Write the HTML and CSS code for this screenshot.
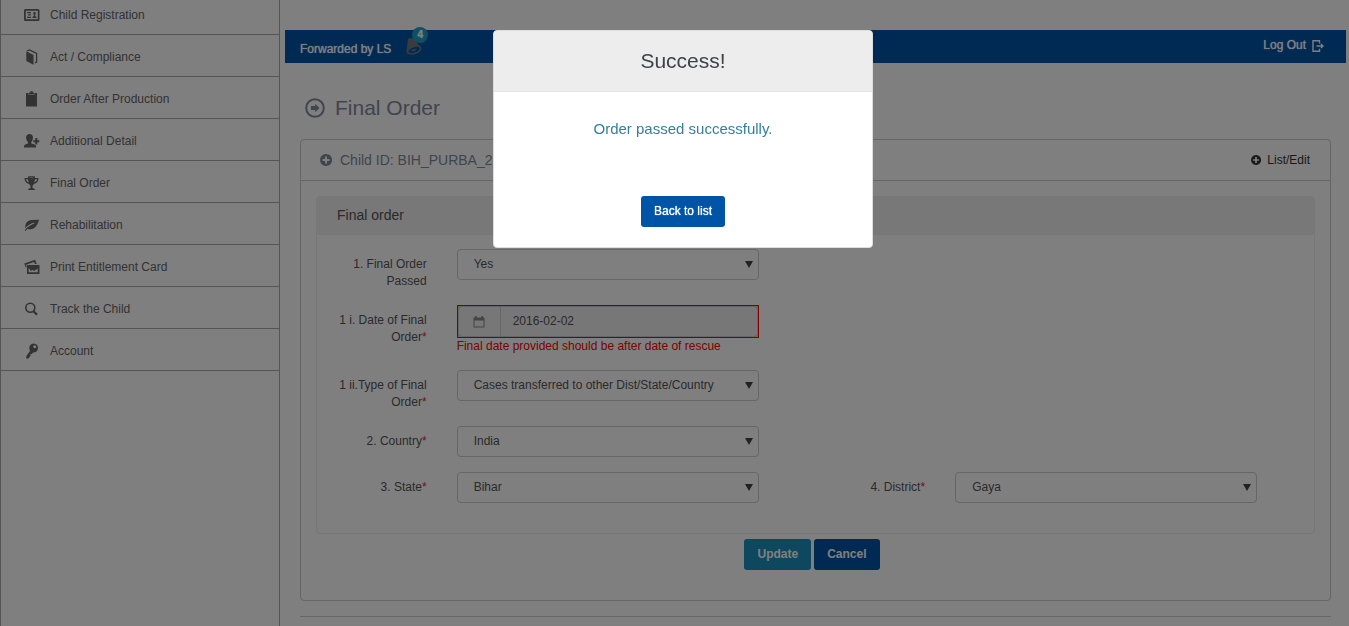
FILE: index.html
```html
<!DOCTYPE html>
<html lang="en">
<head>
<meta charset="utf-8">
<title>Final Order</title>
<link rel="stylesheet" href="styles.css">
</head>
<body>
<div class="layout">
  <nav class="sidebar">
    <ul class="menu">
      <li><a href="#"><svg class="icon" viewBox="0 0 16 16"><path fill-rule="evenodd" d="M1.500 2h12.500q1.500 0 1.500 1.500v9q0 1.500-1.500 1.500h-12.500Q0 14 0 12.500v-9Q0 2 1.500 2zM1.800 3.800v8.500h12V3.800zM3 5h4v1.300H3zM4 7.300h3v1.300H4zM3 9.700h4V11H3zM8.500 11v-1l1.300-1V7.500Q9 7 9.200 6 9.400 5 10.500 5t1.300 1q.2 1-.6 1.500V9l1.300 1v1z"/></svg>Child Registration</a></li>
      <li><a href="#"><svg class="icon" viewBox="0 0 16 16"><path d="M2.300 2.200 9.500 6v9.800L2.300 12z"/><path d="M3 2 5.500.9 12.600 4.500V13l-1.800.8" fill="none" stroke="currentColor" stroke-width="1.300"/></svg>Act / Compliance</a></li>
      <li><a href="#"><svg class="icon" viewBox="0 0 16 16"><path d="M2 2h2.500v1.500h6V2H13v13.500H2z"/><path d="M5 1.500h1.300V.3h2.500v1.200H10V3H5z"/></svg>Order After Production</a></li>
      <li><a href="#"><svg class="icon" viewBox="0 0 16 16"><path d="M0 14.500V13q0-1.500 4-2.500V9.200Q2 7 2 4.500 2.300 1 5.500 1T9 4.500Q9 7 7.300 9.200v1.300q4.700 1 4.700 2.500v1.500z"/><path d="M11.300 5h2v2.200h2v2h-2v2.300h-2V9.200h-2v-2h2z"/></svg>Additional Detail</a></li>
      <li><a href="#"><svg class="icon" viewBox="0 0 16 16"><path fill-rule="evenodd" d="M4 1.500Q7.500.4 11 1.500V3h3.500Q14.500 8 9.800 9 9 10.500 8.500 11v2q2 .2 2.500 2H4q.5-1.800 2.500-2v-2q-.5-.5-1.300-2Q.500 8 .5 3H4zM1.900 4.200Q2.300 6.800 4.700 7.500L4 4.200zm11.200 0H11l-.7 3.300q2.400-.7 2.800-3.300zM5.200 2.200q2.300.8 4.600 0-2.300-.7-4.600 0z"/></svg>Final Order</a></li>
      <li><a href="#"><svg class="icon" viewBox="0 0 16 16"><path fill-rule="evenodd" d="M15.200 2.800Q12 13 5.500 12.300q-1.200 0-2.200-.5L1.700 14 .7 13.300Q3 9.800 10.500 6.200L10.200 5.500Q4 7.500 1.200 11.300.8 4 7 3 11 2.800 15.200 2.800z"/></svg>Rehabilitation</a></li>
      <li><a href="#"><svg class="icon" viewBox="0 0 16 16"><path fill-rule="evenodd" d="M3 6h12.500v9H3zM4.700 13.300h9V9.500L10 12 8.500 10.800 7 12 4.700 9z"/><path d="M.2 4.500 11 .8 12.800 5H11l-1-2L2 5.700l.8 2.500-1 .3z"/><path d="M3 6h12v2.500H3z"/></svg>Print Entitlement Card</a></li>
      <li><a href="#"><svg class="icon" viewBox="0 0 16 16"><g fill="none" stroke="currentColor"><circle cx="6.300" cy="6.700" r="4.500" stroke-width="1.600"/><path d="M9.300 10 13 13.700" stroke-width="2.200"/></g></svg>Track the Child</a></li>
      <li><a href="#"><svg class="icon" viewBox="0 0 16 16"><path fill-rule="evenodd" d="M9.500.5q4.500.3 4.500 4.500-.3 4.500-5 4.500l-1 1.500H6.500v1.700L4.500 15.500H2.300V13L6 8Q4.500 4 6.300 2 7.500.5 9.500.5zM10.700 2.300a1.500 1.500 0 1 0 .1 0z"/></svg>Account</a></li>
    </ul>
  </nav>

  <main class="main">
    <header class="topbar">
      <a class="topbar-note" href="#">Forwarded by LS
        <span class="bell"><svg class="bell-icon" viewBox="0 0 16 17"><path d="M2 1Q4-1 8 1l5.500 7L1 16Q0 14 .8 11z"/><ellipse cx="8.200" cy="12" rx="6.800" ry="3.500" transform="rotate(-20 8.200 12)" fill="#0054a8" stroke="currentColor" stroke-width="1.500"/><path d="M4.500 12.500Q7 10.500 10.500 11 9 14.500 4.500 12.500z"/></svg><span class="badge">4</span></span>
      </a>
      <a class="logout" href="#">Log Out <svg class="logout-icon" viewBox="0 0 12 12"><g fill="none" stroke="currentColor" stroke-width="1.400"><path d="M7.500 3.500V.8H1v10.500h6.500V8.700M4.500 6H11M9 4l2 2-2 2"/></g></svg></a>
    </header>

    <div class="content">
      <h1 class="title"><svg class="title-icon" viewBox="0 0 20 20"><circle cx="10" cy="10" r="8.800" fill="none" stroke="currentColor" stroke-width="2"/><path d="M6 8h4.200V5.800L14.500 10l-4.300 4.200V12H6z"/></svg>Final Order</h1>

      <section class="panel">
        <div class="panel-head">
          <h2 class="panel-title"><svg class="plus" viewBox="0 0 12 12"><path fill-rule="evenodd" d="M6 0a6 6 0 1 0 .1 0zM5 2.500h2V5h2.500v2H7v2.500H5V7H2.500V5H5z"/></svg>Child ID: BIH_PURBA_20160201</h2>
          <a class="list-link" href="#"><svg class="plus plus-small" viewBox="0 0 12 12"><path fill-rule="evenodd" d="M6 0a6 6 0 1 0 .1 0zM5 2.500h2V5h2.500v2H7v2.500H5V7H2.500V5H5z"/></svg>List/Edit</a>
        </div>
        <form class="panel-body">
          <div class="card">
            <h3 class="card-head">Final order</h3>
            <div class="fields">
              <div class="field">
                <label for="passed">1. Final Order Passed</label>
                <div class="select"><select id="passed"><option>Yes</option></select></div>
              </div>
              <div class="field">
                <label for="date">1 i. Date of Final Order<span class="req">*</span></label>
                <div>
                  <div class="date"><span class="addon"><svg class="cal" viewBox="0 0 12 12"><path fill-rule="evenodd" d="M.5 1.500H2V0h1.500v1.500h5V0H10v1.500h1.500v10H.5zM1.500 4.500v6h9v-6z"/></svg></span><input id="date" type="text" value="2016-02-02" readonly></div>
                  <div class="error">Final date provided should be after date of rescue</div>
                </div>
              </div>
              <div class="field">
                <label for="type">1 ii.Type of Final Order<span class="req">*</span></label>
                <div class="select"><select id="type"><option>Cases transferred to other Dist/State/Country</option></select></div>
              </div>
              <div class="field">
                <label for="country">2. Country<span class="req">*</span></label>
                <div class="select"><select id="country"><option>India</option></select></div>
              </div>
              <div class="field">
                <label for="state">3. State<span class="req">*</span></label>
                <div class="select"><select id="state"><option>Bihar</option></select></div>
              </div>
              <div class="field second">
                <label for="district">4. District<span class="req">*</span></label>
                <div class="select"><select id="district"><option>Gaya</option></select></div>
              </div>
            </div>
          </div>
          <div class="actions">
            <button class="btn btn-update" type="button">Update</button>
            <button class="btn" type="button">Cancel</button>
          </div>
        </form>
      </section>
      <hr class="rule">
    </div>
  </main>
</div>

<div class="backdrop">
  <div class="modal" role="dialog" aria-labelledby="modal-title">
    <h2 class="modal-head" id="modal-title">Success!</h2>
    <div class="modal-body">
      <p class="message">Order passed successfully.</p>
      <button class="btn btn-back" type="button">Back to list</button>
    </div>
  </div>
</div>
</body>
</html>
```

FILE: styles.css
```css
* { box-sizing: border-box; }

body {
  margin: 0;
  background: #fff;
  color: #555;
  font: 12px/17px "Liberation Sans", Arial, sans-serif;
  overflow: hidden;
}

a { color: inherit; text-decoration: none; }
svg { fill: currentColor; flex: none; }
h1, h2, h3, p { margin: 0; font-weight: normal; }

.layout { display: flex; height: 100vh; }

/* Side menu */
.sidebar {
  flex: none;
  width: 280px;
  border: solid #aaa;
  border-width: 0 1px;
}
.menu { list-style: none; margin: -7px 0 0; padding: 0; }
.menu a {
  display: flex;
  align-items: center;
  gap: 10px;
  height: 42px;
  padding: 4px 0 0 23px;
  border-bottom: 1px solid #aaa;
  color: #666;
}
.icon { width: 16px; height: 16px; margin-bottom: 2px; }

/* Top bar */
.main { flex: 1; min-width: 0; padding: 30px 3px 0 5px; }
.topbar {
  display: flex;
  justify-content: space-between;
  align-items: flex-start;
  height: 33px;
  padding: 0 22px 0 15px;
  background: #0054a8;
  color: #fff;
  text-shadow: 0 0 1px currentColor;
}
.topbar-note { display: flex; gap: 15px; padding-top: 11px; }
.bell { position: relative; color: #777; }
.bell-icon { display: block; width: 16px; height: 17px; margin-top: -3px; }
.badge {
  position: absolute;
  left: 6px;
  top: -14px;
  width: 16px;
  border-radius: 8px;
  background: #20a0c8;
  color: #fff;
  font-size: 10px;
  font-weight: bold;
  line-height: 16px;
  text-align: center;
}
.logout { display: flex; align-items: center; gap: 6px; padding-top: 7px; }
.logout-icon { width: 12px; height: 12px; }

/* Page content */
.content { padding: 31px 15px 0; }
.title {
  display: flex;
  align-items: center;
  gap: 10px;
  padding-left: 5px;
  margin-bottom: 17px;
  font-size: 21px;
  line-height: 28px;
  color: #808a9a;
}
.title-icon { width: 20px; height: 20px; }

.panel { border: 1px solid #ccc; border-radius: 4px; }
.panel-head {
  display: flex;
  align-items: center;
  justify-content: space-between;
  height: 41px;
  padding: 0 20px 0 19px;
  border-bottom: 1px solid #ccc;
}
.panel-title { display: flex; align-items: center; gap: 8px; font-size: 14px; color: #808a9a; }
.plus { width: 12px; height: 12px; }
.plus-small { width: 10px; height: 10px; }
.list-link { display: flex; align-items: center; gap: 6px; color: #333; }
.panel-body { padding: 15px 15px 30px; }

.card { border: 1px solid #eee; border-radius: 4px; }
.card-head {
  padding: 0 20px;
  background: #f0f0f0;
  border-bottom: 1px solid #eee;
  font-size: 14px;
  line-height: 37px;
  color: #555;
}
.fields {
  display: grid;
  grid-template-columns: 1fr 1fr;
  row-gap: 15px;
  padding: 14px 0 30px;
}
.field {
  grid-column: 1;
  display: grid;
  grid-template-columns: 3fr 8fr 1fr;
  align-items: start;
}
.field.second { grid-column: 2; }
.field > * { margin: 0 15px; }
.field > label { padding-top: 7px; text-align: right; margin-left: 14px; }
.req { color: #e02040; }

.select { position: relative; }
.select::after {
  content: "";
  position: absolute;
  right: 6px;
  top: 12px;
  border: solid transparent;
  border-width: 7px 4px 0;
  border-top-color: #444;
}
select, input { font: inherit; color: #555; }
select {
  display: block;
  width: 100%;
  height: 31px;
  padding: 0 20px 1px 16px;
  border: 1px solid #ccc;
  border-radius: 4px;
  background: #fff;
  appearance: none;
}
.date { display: flex; height: 33px; border: 1px solid #f00; background: #ccc; }
.addon {
  display: flex;
  align-items: center;
  justify-content: center;
  width: 43px;
  border: 1px solid #ccc;
  border-radius: 4px 0 0 4px;
  background: #eee;
  color: #888;
}
.cal { width: 12px; height: 12px; }
.date input {
  flex: 1;
  min-width: 0;
  padding: 0 12px;
  border: 1px solid #ccc;
  border-left: 0;
  border-radius: 0 4px 4px 0;
  background: #eee;
}
.error { color: #f00; }

.actions { display: flex; justify-content: center; gap: 3px; padding: 5px 7px 0 0; }
.btn {
  height: 31px;
  padding: 0 13px 1px;
  border: 0;
  border-radius: 3px;
  background: #0054a8;
  color: #fff;
  font: bold 12px/17px "Liberation Sans", Arial, sans-serif;
}
.btn-update { background: #1c90bc; }
.rule { margin: 15px 0 0; border: 0; border-top: 1px solid #ccc; }

/* Dialog */
.backdrop {
  position: fixed;
  inset: 0;
  display: flex;
  justify-content: center;
  align-items: flex-start;
  padding: 30px 0 0 17px;
  background: rgba(0, 0, 0, 0.5);
}
.modal {
  width: 380px;
  border: 1px solid #ddd;
  border-radius: 4px;
  background: #fff;
  text-align: center;
  overflow: hidden;
}
.modal-head {
  background: #ededed;
  border-bottom: 1px solid #e5e5e5;
  color: #3f4248;
  font-size: 21px;
  line-height: 60px;
}
.modal-body { padding: 28px 20px 20px; }
.message { margin-bottom: 58px; color: #31819c; font-size: 15px; line-height: 18px; }
.btn-back { font-weight: normal; text-shadow: 0 0 1px currentColor; }
```
